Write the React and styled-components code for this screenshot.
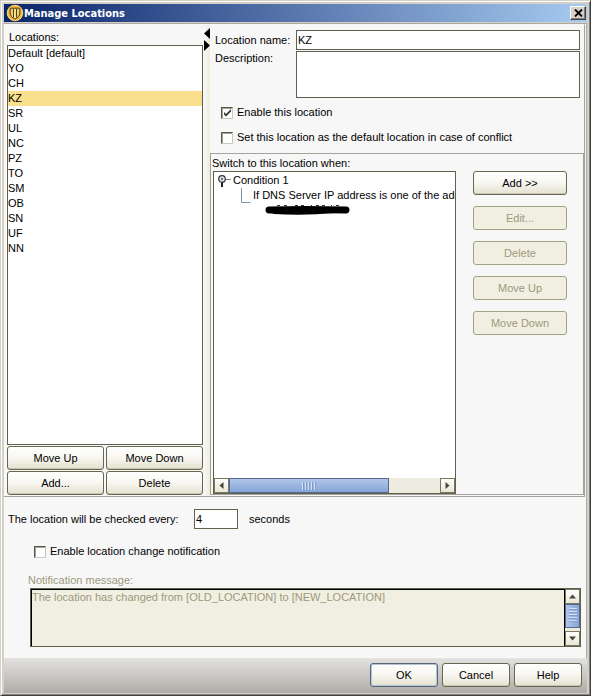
import React, { useState } from "react";
import styled, { createGlobalStyle, css } from "styled-components";

const initialLocations = [
  "Default [default]",
  "YO",
  "CH",
  "KZ",
  "SR",
  "UL",
  "NC",
  "PZ",
  "TO",
  "SM",
  "OB",
  "SN",
  "UF",
  "NN"
];

function ShieldIcon() {
  return (
    <svg width="18" height="18" viewBox="0 0 18 18" aria-hidden="true">
      <circle cx="9" cy="9" r="8.300" fill="#efb736" />
      <circle cx="9" cy="9" r="7.500" fill="none" stroke="#f6d27a" />
      <path
        d="M4.200 4.200h9.600v5c0 2.500-2.200 4.800-4.800 6c-2.600-1.200-4.800-3.500-4.800-6z"
        fill="#f3cf63"
        stroke="#4d4224"
      />
      <path d="M7.500 5v8.500M10.500 5v8.500" stroke="#4d4224" />
      <path d="M9 5v9" stroke="#fff0b5" />
    </svg>
  );
}

function Arrow({ direction }) {
  const turn = { up: 0, right: 90, down: 180, left: 270 }[direction];
  return (
    <svg width="9" height="9" viewBox="0 0 9 9" aria-hidden="true">
      <path d="M4.500 2.500L8 6.500H1z" fill="#45463a" transform={`rotate(${turn} 4.500 4.500)`} />
    </svg>
  );
}

function CheckField({ id, label, checked, onChange }) {
  return (
    <CheckLabel htmlFor={id}>
      <CheckBox>
        <input id={id} type="checkbox" checked={checked} onChange={onChange} />
        {checked && (
          <svg width="12" height="12" viewBox="0 0 12 12" aria-hidden="true">
            <path d="M3 5v2.500l2 2 5-5V2L5 7z" fill="#333" />
          </svg>
        )}
      </CheckBox>
      {label}
    </CheckLabel>
  );
}

function ScrollBar({ vertical, className }) {
  return (
    <ScrollTrack $vertical={vertical} className={className}>
      <ScrollButton type="button" aria-label={vertical ? "Scroll up" : "Scroll left"}>
        <Arrow direction={vertical ? "up" : "left"} />
      </ScrollButton>
      <ScrollRoom>
        <ScrollThumb $vertical={vertical}>
          <Grip $vertical={vertical} />
        </ScrollThumb>
      </ScrollRoom>
      <ScrollButton type="button" aria-label={vertical ? "Scroll down" : "Scroll right"}>
        <Arrow direction={vertical ? "down" : "right"} />
      </ScrollButton>
    </ScrollTrack>
  );
}

function LocationList({ selected, onSelect }) {
  return (
    <LocationsPanel>
      <LocationsTitle id="locations-title">Locations:</LocationsTitle>
      <List role="listbox" aria-labelledby="locations-title">
        {initialLocations.map(name => (
          <ListRow
            key={name}
            role="option"
            aria-selected={name === selected}
            $selected={name === selected}
            onClick={() => onSelect(name)}
          >
            {name}
          </ListRow>
        ))}
      </List>
      <ListButtons>
        <Button type="button">Move Up</Button>
        <Button type="button">Move Down</Button>
        <Button type="button">Add...</Button>
        <Button type="button">Delete</Button>
      </ListButtons>
    </LocationsPanel>
  );
}

function ConditionTree() {
  return (
    <TreeBox>
      <Tree>
        <TreeRow>
          <svg width="16" height="15" viewBox="0 0 16 15" aria-hidden="true">
            <path d="M8 6.500h6" stroke="#6b8194" />
            <path d="M5 9v5" stroke="#222" strokeWidth="2" />
            <circle cx="5" cy="6" r="3.300" fill="#dde3e6" stroke="#333" strokeWidth="1.200" />
            <circle cx="5" cy="6" r="1.200" fill="#777" />
          </svg>
          Condition 1
        </TreeRow>
        <TreeLeaf>
          <svg width="13" height="15" viewBox="0 0 13 15" aria-hidden="true">
            <path d="M1.500 0v14.500h9" fill="none" stroke="#7d95a6" />
          </svg>
          If DNS Server IP address is one of the addresses
        </TreeLeaf>
        <Redacted width="88" height="12" viewBox="0 0 88 12" aria-hidden="true">
          <path d="M5 7Q40 6 82 7" fill="none" stroke="#000" strokeWidth="7" strokeLinecap="round" />
          <path d="M10 9Q40 11 70 8" fill="none" stroke="#000" strokeWidth="4" strokeLinecap="round" />
          <path
            d="M13 2.500h3M20 2.500h3M31 2.500h3M37 2.500h3M47 2.500h1M52 2.500h3M58 2.500h3M67 2.500h1M72 2.500h3"
            stroke="#333"
          />
        </Redacted>
      </Tree>
      <ScrollBar />
    </TreeBox>
  );
}

function App() {
  const [selected, setSelected] = useState("KZ");
  const [name, setName] = useState("KZ");
  const [description, setDescription] = useState("");
  const [enabled, setEnabled] = useState(true);
  const [isDefault, setIsDefault] = useState(false);
  const [seconds, setSeconds] = useState("4");
  const [notify, setNotify] = useState(false);

  function handleSelect(location) {
    setSelected(location);
    setName(location);
  }

  return (
    <Window>
      <GlobalStyle />
      <TitleBar>
        <ShieldIcon />
        <Title>Manage Locations</Title>
        <CloseButton type="button" aria-label="Close">
          <svg width="9" height="8" viewBox="0 0 9 8" aria-hidden="true">
            <path d="M1 0.500L8 7.500M8 0.500L1 7.500" stroke="#000" strokeWidth="1.800" />
          </svg>
        </CloseButton>
      </TitleBar>

      <Content>
        <SplitPane>
          <LocationList selected={selected} onSelect={handleSelect} />
          <Divider>
            <svg width="6" height="24" viewBox="0 0 6 24" aria-hidden="true">
              <path d="M6 0v11L0 5.500z M0 12v11L6 17.500z" fill="#000" />
            </svg>
          </Divider>
          <Details>
            <Fields>
              <label htmlFor="location-name">Location name:</label>
              <TextInput id="location-name" value={name} onChange={e => setName(e.target.value)} />
              <TopLabel htmlFor="description">Description:</TopLabel>
              <TextArea id="description" value={description} onChange={e => setDescription(e.target.value)} />
            </Fields>
            <Checks>
              <CheckField
                id="enable-location"
                label="Enable this location"
                checked={enabled}
                onChange={e => setEnabled(e.target.checked)}
              />
              <CheckField
                id="default-location"
                label="Set this location as the default location in case of conflict"
                checked={isDefault}
                onChange={e => setIsDefault(e.target.checked)}
              />
            </Checks>
            <Conditions>
              <ConditionsMain>
                <div>Switch to this location when:</div>
                <ConditionTree />
              </ConditionsMain>
              <ConditionButtons>
                <Button type="button">Add &gt;&gt;</Button>
                <Button type="button" disabled>Edit...</Button>
                <Button type="button" disabled>Delete</Button>
                <Button type="button" disabled>Move Up</Button>
                <Button type="button" disabled>Move Down</Button>
              </ConditionButtons>
            </Conditions>
          </Details>
        </SplitPane>

        <Settings>
          <IntervalRow>
            <label htmlFor="interval">The location will be checked every:</label>
            <IntervalInput id="interval" value={seconds} onChange={e => setSeconds(e.target.value)} />
            <span>seconds</span>
          </IntervalRow>
          <NotifyRow>
            <CheckField
              id="notify"
              label="Enable location change notification"
              checked={notify}
              onChange={e => setNotify(e.target.checked)}
            />
          </NotifyRow>
          <MessageLabel htmlFor="message">Notification message:</MessageLabel>
          <MessageBox>
            <MessageText
              id="message"
              disabled={!notify}
              defaultValue="The location has changed from [OLD_LOCATION] to [NEW_LOCATION]"
            />
            <ScrollBar vertical />
          </MessageBox>
        </Settings>
      </Content>

      <Footer>
        <FooterButton type="button" $primary>OK</FooterButton>
        <FooterButton type="button">Cancel</FooterButton>
        <FooterButton type="button">Help</FooterButton>
      </Footer>
    </Window>
  );
}

export default App;

const GlobalStyle = createGlobalStyle`
  * {
    box-sizing: border-box;
  }
  body {
    margin: 0;
    background: #d4d0c8;
  }
  body, button, input, textarea {
    font-family: "Liberation Sans", Arial, sans-serif;
    font-size: 11px;
    line-height: 15px;
    color: #000;
  }
  svg {
    flex: none;
  }
`;

const Window = styled.div`
  display: flex;
  flex-direction: column;
  min-height: 100vh;
  padding: 2px;
  background: #d4d0c8;
  border: 1px solid #d4d0c8;
  border-right-color: #404040;
  border-bottom-color: #404040;
  box-shadow: inset 1px 1px #fff, inset -1px -1px #808080;
`;

const TitleBar = styled.header`
  display: flex;
  align-items: center;
  height: 18px;
  margin: 1px 1px 0;
  padding: 0 1px 0 2px;
  background: linear-gradient(90deg, #0a246a, #a6caf0);
`;

const Title = styled.h1`
  flex: 1;
  margin: 0;
  font-family: "DejaVu Sans Condensed", "DejaVu Sans", sans-serif;
  font-size: 11px;
  font-weight: bold;
  color: #fff;
`;

const CloseButton = styled.button`
  display: grid;
  place-items: center;
  width: 16px;
  height: 14px;
  padding: 0;
  background: #d4d0c8;
  border: 1px solid #fff;
  border-right-color: #404040;
  border-bottom-color: #404040;
  box-shadow: inset -1px -1px #808080;
`;

const Content = styled.main`
  display: flex;
  flex: 1;
  flex-direction: column;
  margin: 1px 1px 0;
  background: #f7f7f7;
  border-top: 1px solid #aaa9a2;
  border-right: 1px solid #aaa9a2;
`;

const SplitPane = styled.div`
  display: flex;
  flex: 1;
  margin-right: 1px;
  border: 1px solid #a3a39c;
  border-left: none;
  border-top-color: #f7f7f7;
`;

const LocationsPanel = styled.section`
  display: flex;
  flex-direction: column;
  flex: 0 0 200px;
  padding: 5px 1px 1px 3px;
`;

const LocationsTitle = styled.div`
  padding: 0 2px;
`;

const List = styled.ul`
  flex: 1;
  margin: 0;
  padding: 0;
  list-style: none;
  background: #fff;
  border: 1px solid #60614c;
`;

const ListRow = styled.li`
  background: ${props => (props.$selected ? "#fae08c" : "transparent")};
  cursor: default;
`;

const Button = styled.button`
  height: 24px;
  padding: 0 4px;
  background: linear-gradient(#fff, #f7f6f0 50%, #e4e1cf);
  border: 1px solid #66674f;
  border-radius: 3px;
  box-shadow: inset 0 -1px #c9c6b3;
  white-space: nowrap;

  &:disabled {
    color: #9b9a7b;
    background: #f1efe2;
    border-color: #a3a283;
    box-shadow: none;
  }
`;

const ListButtons = styled.div`
  display: grid;
  grid-template-columns: 1fr 1fr;
  gap: 1px 2px;
  padding-top: 1px;
`;

const Divider = styled.div`
  flex: none;
  width: 6px;
  padding-top: 3px;
  line-height: 0;
  background: linear-gradient(90deg, #f7f7f7, #f0ecdb);
`;

const Details = styled.section`
  display: flex;
  flex: 1;
  flex-direction: column;
  min-width: 0;
`;

const Fields = styled.div`
  display: grid;
  grid-template-columns: 79px 1fr;
  gap: 1px 2px;
  align-items: center;
  padding: 5px 4px 0 5px;
`;

const TopLabel = styled.label`
  align-self: start;
`;

const fieldStyle = css`
  width: 100%;
  margin: 0;
  padding: 0 1px;
  background: #fff;
  border: 1px solid #60614c;
  border-radius: 0;
  outline: none;
`;

const TextInput = styled.input`
  ${fieldStyle}
  height: 20px;
`;

const TextArea = styled.textarea`
  ${fieldStyle}
  display: block;
  height: 47px;
  resize: none;
`;

const Checks = styled.div`
  display: flex;
  flex-direction: column;
  align-items: flex-start;
  gap: 10px;
  padding: 7px 11px 8px;
`;

const CheckLabel = styled.label`
  display: flex;
  align-items: center;
  gap: 4px;
`;

const CheckBox = styled.span`
  position: relative;
  width: 12px;
  height: 12px;

  input {
    display: block;
    width: 12px;
    height: 12px;
    margin: 0;
    appearance: none;
    background: #fff;
    border: 1px solid #c9c9c4;
    border-top-color: #55564a;
    border-left-color: #55564a;
    box-shadow: inset 1px 1px #a5a59c;
  }

  svg {
    position: absolute;
    inset: 0;
    pointer-events: none;
  }
`;

const Conditions = styled.div`
  display: flex;
  flex: 1;
  margin-bottom: 1px;
  border: 1px solid #a3a39c;
`;

const ConditionsMain = styled.div`
  display: flex;
  flex: 1;
  flex-direction: column;
  min-width: 0;
  padding: 2px 0 0 1px;
`;

const TreeBox = styled.div`
  display: flex;
  flex: 1;
  flex-direction: column;
  margin-left: 1px;
  background: #fff;
  border: 1px solid #60614c;
`;

const Tree = styled.div`
  flex: 1;
  overflow: hidden;
  padding-top: 1px;
`;

const TreeRow = styled.div`
  display: flex;
  padding-left: 3px;
  white-space: nowrap;
`;

const TreeLeaf = styled(TreeRow)`
  padding-left: 26px;
`;

const Redacted = styled.svg`
  display: block;
  margin-left: 50px;
`;

const ConditionButtons = styled.div`
  display: flex;
  flex: 0 0 127px;
  flex-direction: column;
  gap: 11px;
  padding: 17px 16px 0 17px;
`;

const ScrollTrack = styled.div`
  display: flex;
  flex: none;
  flex-direction: ${props => (props.$vertical ? "column" : "row")};
  ${props => (props.$vertical ? "width: 15px;" : "height: 15px;")}
  background: #eeece0;
`;

const ScrollButton = styled.button`
  display: grid;
  place-items: center;
  flex: none;
  width: 15px;
  height: 15px;
  padding: 0;
  background: linear-gradient(#fff, #e9e6d6);
  border: 1px solid #77785f;
`;

const ScrollRoom = styled.div`
  flex: 1;
  min-width: 0;
  min-height: 0;
`;

const ScrollThumb = styled.div`
  display: grid;
  place-items: center;
  width: ${props => (props.$vertical ? "100%" : "76%")};
  height: ${props => (props.$vertical ? "88%" : "100%")};
  background: linear-gradient(${props => (props.$vertical ? "90deg" : "180deg")}, #b0c6ea, #86a5d8);
  border: 1px solid #56698c;
`;

const Grip = styled.span`
  width: ${props => (props.$vertical ? "8px" : "15px")};
  height: ${props => (props.$vertical ? "15px" : "8px")};
  background: repeating-linear-gradient(
    ${props => (props.$vertical ? "180deg" : "90deg")},
    #d3e0f5 0 1px,
    #7f9bca 1px 2px,
    transparent 2px 3px
  );
`;

const Settings = styled.section`
  flex: none;
  padding: 12px 5px 11px 4px;
`;

const IntervalRow = styled.div`
  display: flex;
  align-items: center;
  gap: 11px;

  label {
    width: 175px;
  }
`;

const IntervalInput = styled.input`
  ${fieldStyle}
  width: 44px;
  height: 20px;
`;

const NotifyRow = styled.div`
  display: flex;
  padding: 15px 26px 14px;
`;

const MessageLabel = styled.label`
  display: block;
  padding-left: 20px;
  color: #9b9a7b;
`;

const MessageBox = styled.div`
  display: flex;
  height: 59px;
  margin-left: 22px;
  border: 1px solid #60614c;
`;

const MessageText = styled.textarea`
  flex: 1;
  min-width: 0;
  margin: 0;
  padding: 0;
  background: #f1efe2;
  border: 1px solid #000;
  border-bottom: none;
  outline: none;
  resize: none;

  &:disabled {
    color: #9b9a7b;
  }
`;

const Footer = styled.footer`
  display: flex;
  justify-content: flex-end;
  gap: 4px;
  margin: 0 1px;
  padding: 5px 5px 6px;
  background: linear-gradient(#e3e2e0, #b0aca8);
`;

const FooterButton = styled(Button)`
  width: 68px;
  ${props => props.$primary && "border-color: #54677a; box-shadow: inset 0 0 0 1px #b4c4d4;"}
`;
